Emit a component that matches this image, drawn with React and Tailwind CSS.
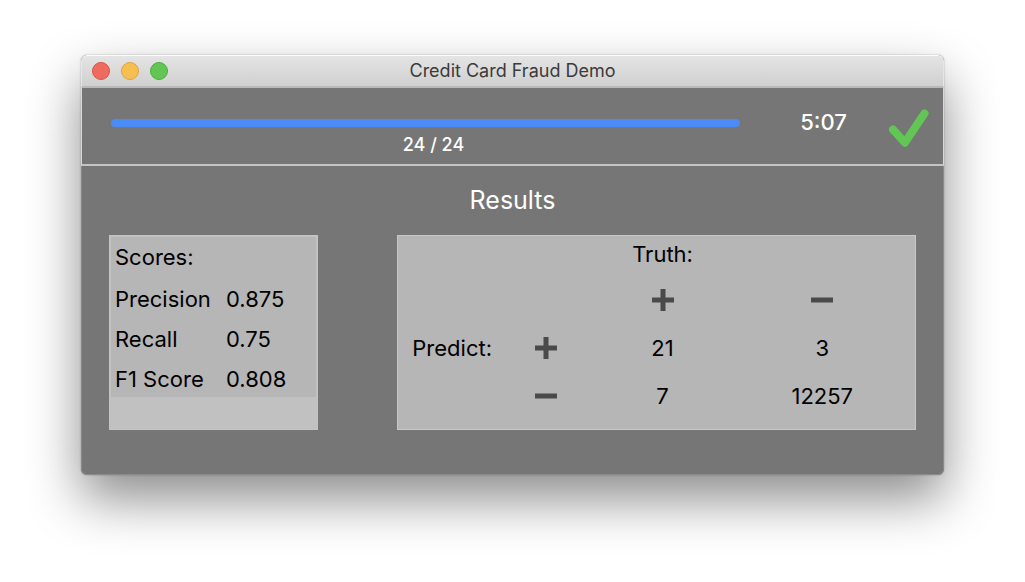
import React from "react";

const scores = [
  { label: "Precision", value: "0.875" },
  { label: "Recall", value: "0.75" },
  { label: "F1 Score", value: "0.808" },
];

function Plus() {
  return (
    <svg viewBox="0 0 22 22" role="img" aria-label="positive" className="mx-auto h-[22px] w-[22px] fill-[#4a4a4a]">
      <path d="M8.5 0h5v8.5H22v5h-8.5V22h-5v-8.5H0v-5h8.5z" />
    </svg>
  );
}

function Minus() {
  return (
    <svg viewBox="0 0 22 22" role="img" aria-label="negative" className="mx-auto h-[22px] w-[22px] fill-[#4a4a4a]">
      <path d="M0 8.5h22v5H0z" />
    </svg>
  );
}

function TitleBar() {
  return (
    <header className="grid h-[33px] grid-cols-[1fr_auto_1fr] items-center rounded-t-md border-x border-t border-b-2 border-x-[#e6e6e6] border-t-[#fbfbfb] border-b-[#b9b9b9] bg-linear-to-b from-[#e4e4e4] to-[#d0d0d0] px-[10px]">
      <div className="flex gap-[11px]">
        <button type="button" aria-label="Close" className="h-[18px] w-[18px] rounded-full border border-[#dc5349] bg-[#ee6b60]" />
        <button type="button" aria-label="Minimize" className="h-[18px] w-[18px] rounded-full border border-[#dca63f] bg-[#f6bf50]" />
        <button type="button" aria-label="Zoom" className="h-[18px] w-[18px] rounded-full border border-[#4bad3d] bg-[#62c655]" />
      </div>
      <h1 className="text-[18px] leading-6 text-[#3b3b3b]">Credit Card Fraud Demo</h1>
    </header>
  );
}

function StatusBar() {
  return (
    <section className="flex h-[78px] border-x border-b-2 border-x-[#d8d8d8] border-b-[#c4c4c4] pr-[14px] pl-[29px] text-white">
      <div className="flex-1 pt-[31px]">
        <div role="progressbar" aria-label="Progress" aria-valuenow={24} aria-valuemin={0} aria-valuemax={24} className="h-2 rounded-full bg-[#4b8bf5]" />
        <p className="pt-[6px] pl-4 text-center text-[18px] leading-6 font-medium">24 / 24</p>
      </div>
      <time className="w-[147px] pt-[18px] pl-5 text-center text-[22px] leading-8 font-medium">5:07</time>
      <svg viewBox="0 0 42 40" fill="none" role="img" aria-label="Complete" className="mt-5 h-10 w-[42px] stroke-[#62c655]">
        <path d="M6 21.5L17.8 34.7L37.5 5.5" strokeWidth="8" strokeLinecap="round" strokeLinejoin="round" />
      </svg>
    </section>
  );
}

function ScoreTable() {
  return (
    <div className="w-[209px] border border-[#c4c4c4] bg-[#c1c1c1] p-px">
      <table className="w-full table-fixed bg-[#b6b6b6] text-left text-[22px] leading-8">
        <caption className="h-10 bg-[#b6b6b6] pt-1 pl-1 text-left">Scores:</caption>
        <colgroup>
          <col className="w-[113px]" />
          <col />
        </colgroup>
        <tbody>
          {scores.map(({ label, value }) => (
            <tr key={label} className="h-10">
              <th scope="row" className="pt-1 pl-1 font-normal">{label}</th>
              <td className="pt-1 pl-0.5">{value}</td>
            </tr>
          ))}
        </tbody>
      </table>
    </div>
  );
}

function ConfusionMatrix() {
  return (
    <div className="flex-1 border border-[#c8c8c8] bg-[#b6b6b6] pr-1 pb-[9px] pl-1.5">
      <table className="w-full table-fixed text-center text-[22px] leading-8">
        <colgroup>
          <col className="w-[19%]" />
          <col className="w-[18%]" />
          <col className="w-[28%]" />
          <col className="w-[35%]" />
        </colgroup>
        <tbody>
          <tr className="h-10">
            <td colSpan={2} />
            <th scope="col" className="pb-1 font-normal">Truth:</th>
            <td />
          </tr>
          <tr className="h-12">
            <td colSpan={2} />
            <th scope="col"><Plus /></th>
            <th scope="col"><Minus /></th>
          </tr>
          <tr className="h-12">
            <th scope="row" className="font-normal">Predict:</th>
            <th scope="row"><Plus /></th>
            <td>21</td>
            <td>3</td>
          </tr>
          <tr className="h-12">
            <td />
            <th scope="row"><Minus /></th>
            <td>7</td>
            <td>12257</td>
          </tr>
        </tbody>
      </table>
    </div>
  );
}

export default function App() {
  return (
    <div className="min-h-screen bg-white px-[81px] pt-[55px] pb-[106px] font-['Inter','Liberation_Sans',sans-serif] text-black">
      <main className="rounded-md bg-[#767676] shadow-[0_0_2px_rgba(0,0,0,0.3),0_24px_52px_rgba(0,0,0,0.45)]">
        <TitleBar />
        <StatusBar />
        <section className="rounded-b-md border-x border-b border-[#8a8a8a] px-[27px] pb-[44px]">
          <h2 className="pt-[14px] text-center text-[25px] leading-10 text-white">Results</h2>
          <div className="mt-[15px] flex gap-[79px]">
            <ScoreTable />
            <ConfusionMatrix />
          </div>
        </section>
      </main>
    </div>
  );
}
